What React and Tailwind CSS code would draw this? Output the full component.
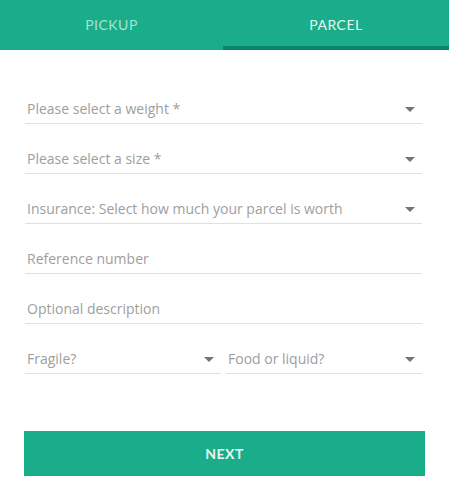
const Caret = () => (
  <svg width="10" height="5" viewBox="0 0 10 5" className="shrink-0">
    <path d="M0 0h10L5 5z" fill="#757575" />
  </svg>
)

function Field({ label, select, className = '' }) {
  return (
    <div className={`h-[50px] flex items-end border-b border-[#e0e0e0] ${className}`}>
      <div className="flex items-center w-full pb-[4px] pl-[2px] pr-[7px]">
        <span className="flex-1 text-[14px] text-[#9e9e9e] leading-[20px] truncate">{label}</span>
        {select && <Caret />}
      </div>
    </div>
  )
}

export default function App() {
  return (
    <div className="w-[449px] h-[491px] bg-white" style={{ fontFamily: '"Open Sans", sans-serif' }}>
      {/* Tabs */}
      <div className="flex h-[50px] bg-[#1aad8a]">
        <div className="w-[223px] flex flex-col">
          <div className="flex-1 flex items-center justify-center pt-[2px] text-[14px] tracking-[0.5px] text-[#a6e3d2] font-['Lato',sans-serif]">PICKUP</div>
          <div className="h-[4px]" />
        </div>
        <div className="flex-1 flex flex-col">
          <div className="flex-1 flex items-center justify-center pt-[2px] text-[14px] tracking-[0.5px] text-[#e6f7f2] font-['Lato',sans-serif]">PARCEL</div>
          <div className="h-[4px] bg-[#0a876b]" />
        </div>
      </div>

      {/* Form */}
      <div className="pl-[25px] pr-[27px] pt-[24px]">
        <Field label="Please select a weight *" select />
        <Field label="Please select a size *" select />
        <Field label="Insurance: Select how much your parcel is worth" select />
        <Field label="Reference number" />
        <Field label="Optional description" />
        <div className="flex gap-[5px]">
          <Field label="Fragile?" select className="flex-1" />
          <Field label="Food or liquid?" select className="flex-1" />
        </div>
      </div>

      <div className="px-[24px] pt-[57px]">
        <button className="w-full h-[45px] bg-[#1aad8a] text-[#e6f7f2] text-[14px] font-bold tracking-[0.5px] font-['Lato',sans-serif]">
          NEXT
        </button>
      </div>
    </div>
  )
}
